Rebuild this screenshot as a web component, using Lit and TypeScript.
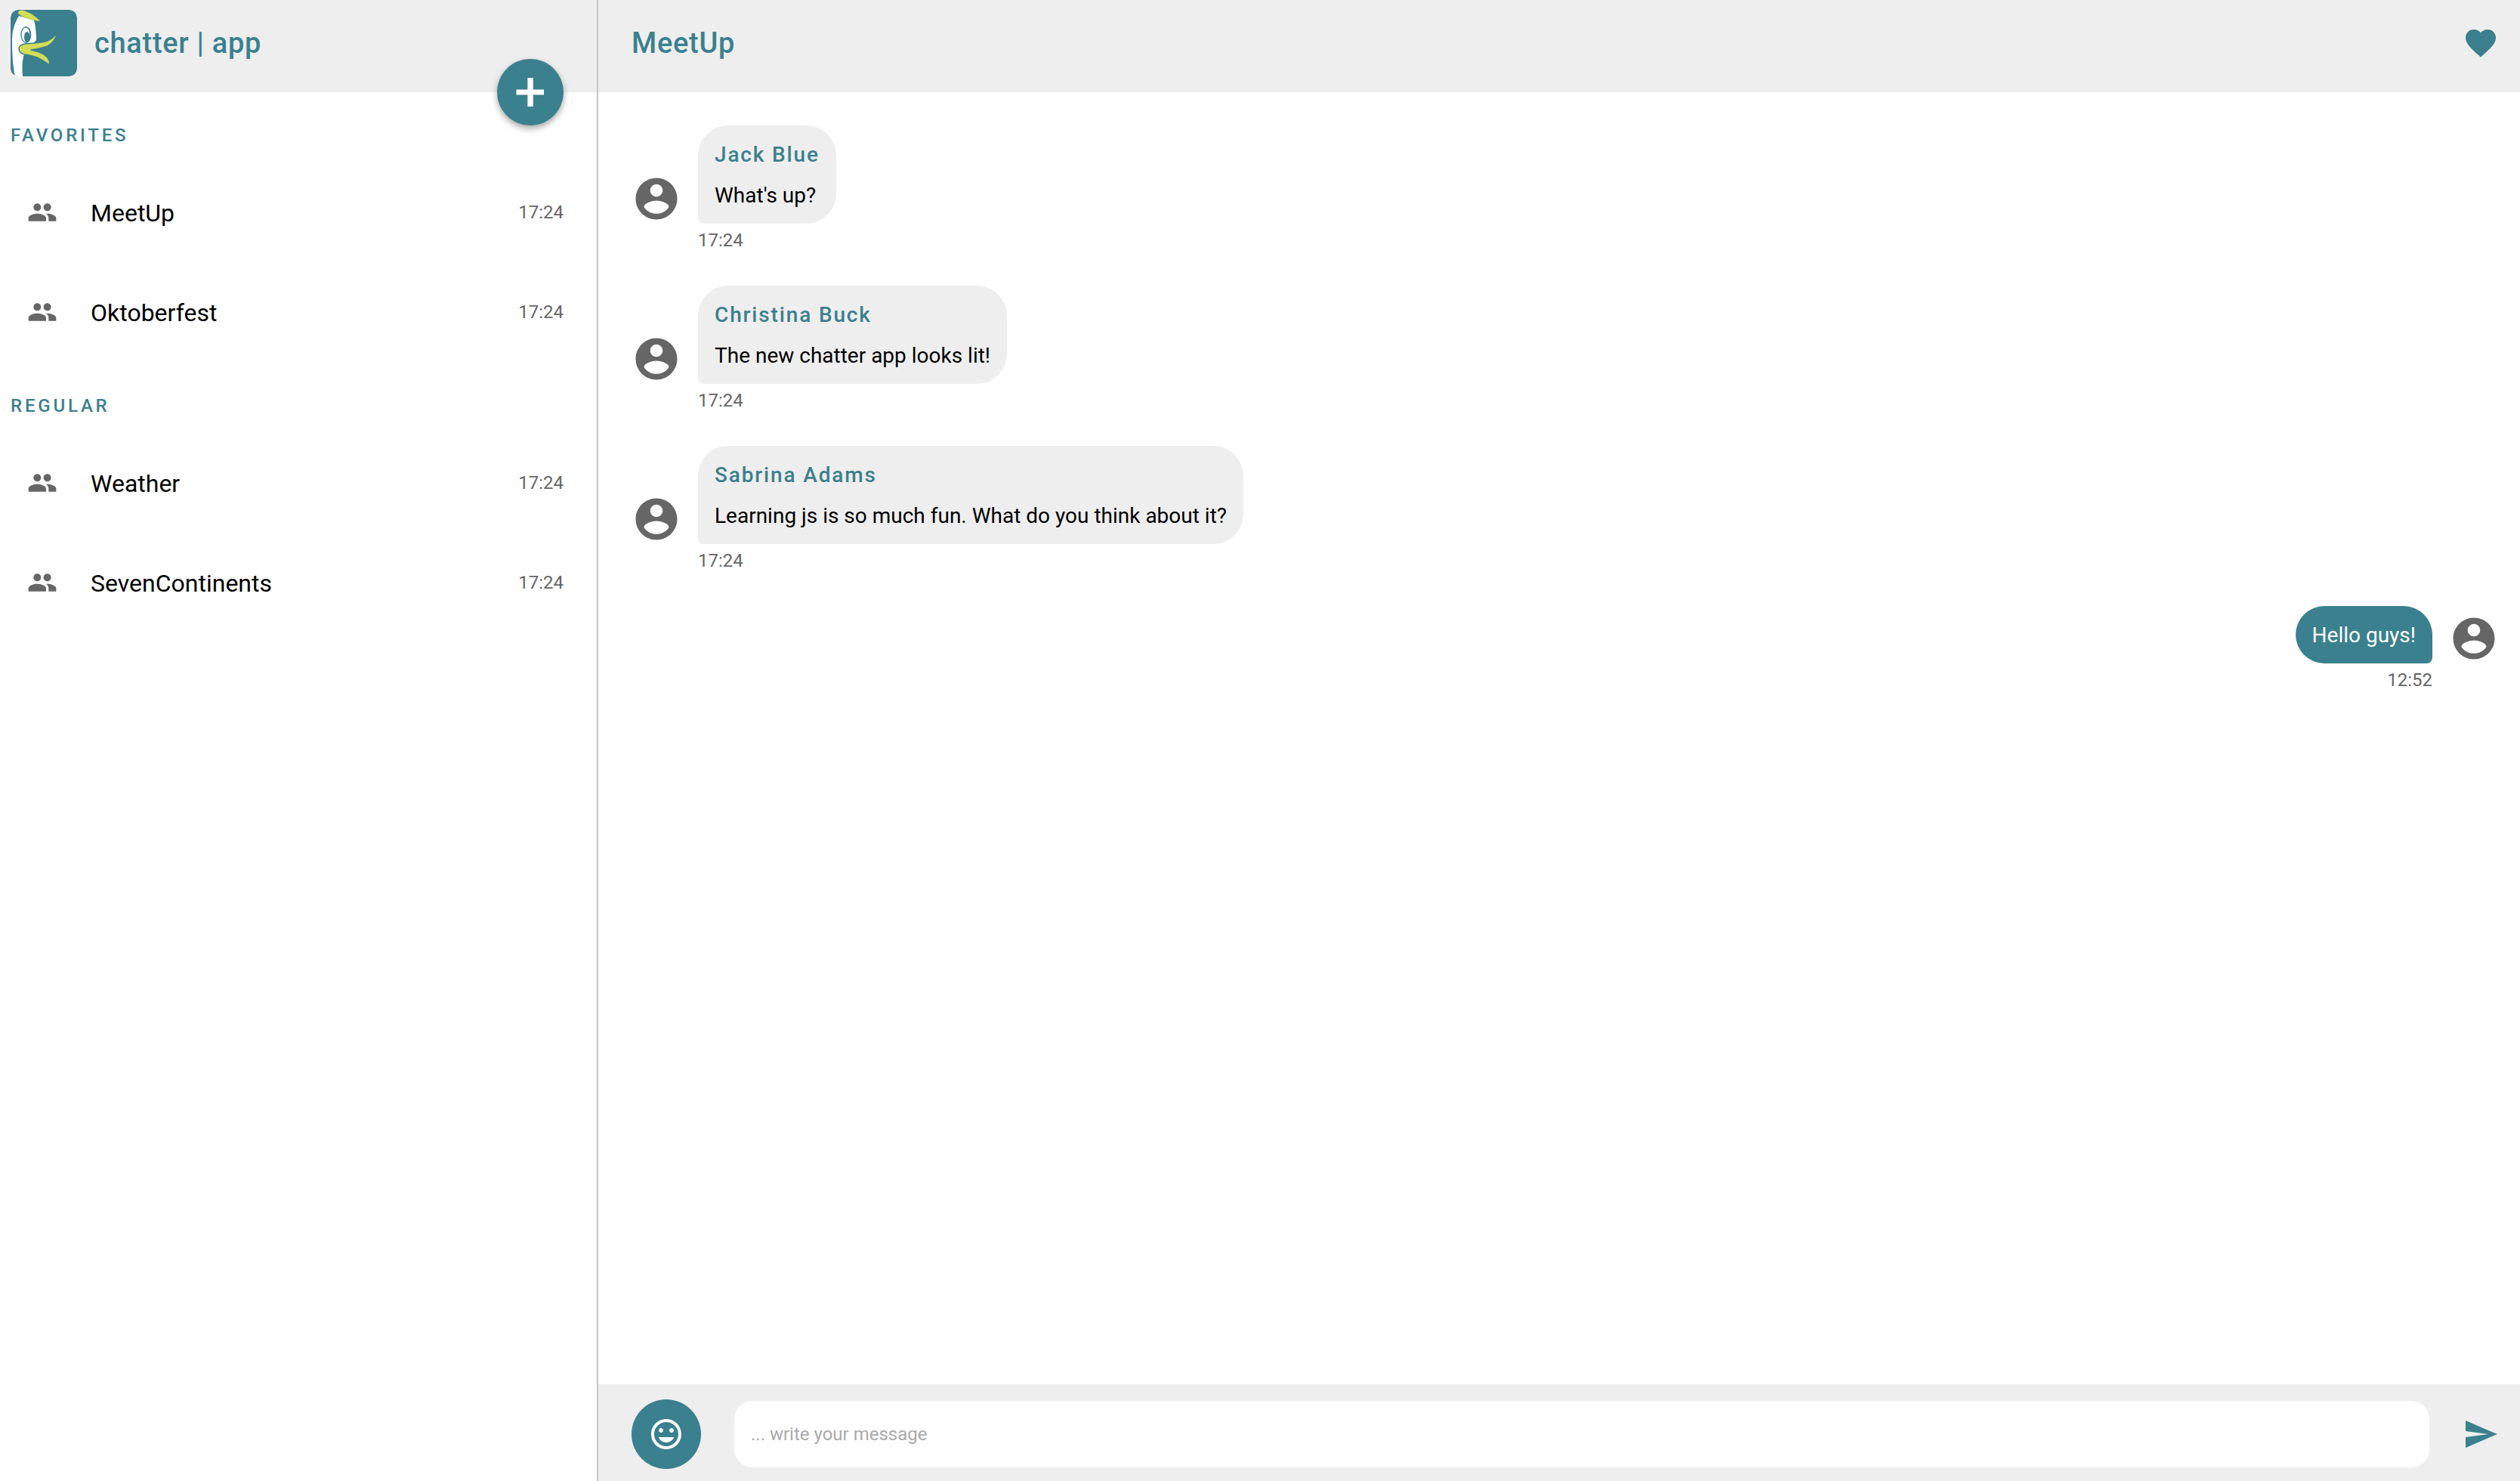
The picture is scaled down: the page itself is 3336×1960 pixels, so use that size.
import { LitElement, html, css } from 'lit';

const icons = {
  people: 'M16 11c1.66 0 2.99-1.34 2.99-3S17.66 5 16 5c-1.66 0-3 1.34-3 3s1.34 3 3 3zm-8 0c1.66 0 2.99-1.34 2.99-3S9.66 5 8 5C6.34 5 5 6.34 5 8s1.34 3 3 3zm0 2c-2.33 0-7 1.17-7 3.5V19h14v-2.5c0-2.33-4.67-3.5-7-3.5zm8 0c-.29 0-.62.02-.97.05 1.16.84 1.97 1.97 1.97 3.45V19h6v-2.5c0-2.33-4.67-3.5-7-3.5z',
  account: 'M12 2C6.48 2 2 6.48 2 12s4.48 10 10 10 10-4.48 10-10S17.52 2 12 2zm0 3c1.66 0 3 1.34 3 3s-1.34 3-3 3-3-1.34-3-3 1.34-3 3-3zm0 14.2c-2.5 0-4.71-1.28-6-3.22.03-1.99 4-3.08 6-3.08 1.99 0 5.97 1.09 6 3.08-1.29 1.94-3.5 3.22-6 3.22z',
  heart: 'M12 21.35l-1.45-1.32C5.4 15.36 2 12.28 2 8.5 2 5.42 4.42 3 7.5 3c1.74 0 3.41.81 4.5 2.09C13.09 3.81 14.76 3 16.5 3 19.58 3 22 5.42 22 8.5c0 3.78-3.4 6.86-8.55 11.54L12 21.35z',
  smile: 'M11.99 2C6.47 2 2 6.48 2 12s4.47 10 9.99 10C17.52 22 22 17.52 22 12S17.52 2 11.99 2zM12 20c-4.42 0-8-3.58-8-8s3.58-8 8-8 8 3.58 8 8-3.58 8-8 8zm3.5-9c.83 0 1.5-.67 1.5-1.5S16.33 8 15.5 8 14 8.67 14 9.5s.67 1.5 1.5 1.5zm-7 0c.83 0 1.5-.67 1.5-1.5S9.33 8 8.5 8 7 8.67 7 9.5 7.67 11 8.5 11zm3.5 6.5c2.33 0 4.31-1.46 5.11-3.5H6.89c.8 2.04 2.78 3.5 5.11 3.5z',
  send: 'M2.01 21L23 12 2.01 3 2 10l15 2-15 2z'
};

const grupos = [
  { titulo: 'FAVORITES', chats: ['MeetUp', 'Oktoberfest'] },
  { titulo: 'REGULAR', chats: ['Weather', 'SevenContinents'] }
];

const mensajes = [
  { autor: 'Jack Blue', texto: "What's up?", hora: '17:24' },
  { autor: 'Christina Buck', texto: 'The new chatter app looks lit!', hora: '17:24' },
  { autor: 'Sabrina Adams', texto: 'Learning js is so much fun. What do you think about it?', hora: '17:24' }
];

export class AppRoot extends LitElement {
  static get styles() {
    return css`
      :host {
        display: grid;
        grid-template-columns: 792px 1fr;
        height: 100vh;
        font-family: Roboto, sans-serif;
        background: #fff;
        color: #000;
      }

      svg {
        display: block;
        flex: none;
        fill: currentColor;
      }

      .lateral {
        position: relative;
        border-right: 2px solid #c6c6c6;
      }

      .cabecera {
        height: 122px;
        background: #eee;
        display: flex;
        align-items: center;
        color: #3b808e;
        font-size: 38px;
        font-weight: 500;
        letter-spacing: 0.7px;
      }

      .lateral .cabecera {
        padding-left: 14px;
        gap: 23px;
        padding-bottom: 8px;
        box-sizing: border-box;
        align-items: center;
      }

      .logo {
        width: 88px;
        height: 88px;
        border-radius: 10px;
      }

      .boton-nuevo {
        position: absolute;
        top: 78px;
        left: 658px;
        width: 88px;
        height: 88px;
        border-radius: 50%;
        background: #3b808e;
        color: #fff;
        display: flex;
        align-items: center;
        justify-content: center;
        box-shadow: 0 4px 8px rgba(0, 0, 0, 0.35);
      }

      .grupo {
        padding-top: 40px;
      }

      .grupo + .grupo {
        padding-top: 41px;
      }

      .grupo h2 {
        margin: 0 0 19px;
        padding-left: 14px;
        font-size: 24px;
        line-height: 34px;
        font-weight: 500;
        letter-spacing: 3.8px;
        color: #3b808e;
      }

      .chat {
        height: 132px;
        padding: 0 44px 0 36px;
        display: flex;
        align-items: center;
        gap: 44px;
        font-size: 32px;
      }

      .chat svg {
        color: #666;
      }

      .chat span {
        flex: 1;
        padding-top: 2px;
      }

      .chat time {
        font-size: 24px;
        color: #666;
      }

      .principal {
        display: flex;
        flex-direction: column;
        min-width: 0;
      }

      .principal .cabecera {
        justify-content: space-between;
        padding: 0 28px 8px 44px;
        box-sizing: border-box;
      }

      .mensajes {
        flex: 1;
        padding: 44px 28px 0 44px;
      }

      .fila {
        display: flex;
        gap: 22px;
        margin-bottom: 46px;
      }

      .fila.mia {
        justify-content: flex-end;
      }

      .fila > svg {
        color: #666;
        margin-top: 64px;
      }

      .fila.mia > svg {
        margin-top: 10px;
      }

      .globo {
        background: #eee;
        border-radius: 40px 40px 40px 8px;
        padding: 20px 22px 18px;
        font-size: 28px;
        line-height: 38px;
      }

      .mia .globo {
        background: #3b808e;
        color: #fff;
        border-radius: 40px 40px 8px 40px;
        padding: 20px 22px 18px;
      }

      .autor {
        margin-bottom: 16px;
        color: #3b808e;
        font-weight: 500;
        letter-spacing: 1.85px;
      }

      .columna time {
        display: block;
        margin-top: 8px;
        font-size: 24px;
        line-height: 28px;
        color: #666;
      }

      .mia .columna {
        display: flex;
        flex-direction: column;
        align-items: flex-end;
      }

      .pie {
        height: 128px;
        box-sizing: border-box;
        padding: 4px 28px 0 44px;
        background: #eee;
        display: flex;
        align-items: center;
        gap: 44px;
        color: #3b808e;
      }

      .boton-emoji {
        width: 92px;
        height: 92px;
        border-radius: 50%;
        background: #3b808e;
        color: #fff;
        display: flex;
        align-items: center;
        justify-content: center;
        flex: none;
      }

      input {
        flex: 1;
        min-width: 0;
        height: 88px;
        box-sizing: border-box;
        border: none;
        outline: none;
        border-radius: 24px;
        padding: 0 22px;
        font-family: inherit;
        font-size: 24px;
        background: #fff;
      }

      input::placeholder {
        color: #aaa;
        opacity: 1;
      }
    `;
  }

  _icono(d, size) {
    return html`<svg width=${size} height=${size} viewBox="0 0 24 24"><path d=${d}></path></svg>`;
  }

  _mas() {
    return html`<svg width="38" height="38" viewBox="0 0 38 38"><path d="M15.4 0H22.8V15.5H37V22.5H22.8V38H15.4V22.5H0.5V15.5H15.4Z"></path></svg>`;
  }

  _logo() {
    return html`
      <svg class="logo" viewBox="0 0 88 88">
        <path fill="#3b808e" d="M10 0H78A10 10 0 0 1 88 10V78A10 10 0 0 1 78 88H10A10 10 0 0 1 0 78V10A10 10 0 0 1 10 0Z"></path>
        <path fill="#fff" d="M6 88H16C15 76 15.5 66 18 59L34 40C34 30 33 21 31 14L11 8C5 18 2 28 2 40C2 58 3 76 6 88Z"></path>
        <path fill="#d2dc56" d="M10 3C12 0 16 0 20 2C28 5 35 10 39 15C30 14 18 11 13 7C11 6 10 5 10 3Z"></path>
        <ellipse cx="20.3" cy="33" rx="7" ry="11" fill="#3b808e"></ellipse>
        <ellipse cx="20" cy="33" rx="5.4" ry="9.4" fill="#fff"></ellipse>
        <ellipse cx="21.8" cy="36" rx="3.8" ry="7" fill="#3b808e"></ellipse>
        <path fill="#d2dc56" stroke="#3b808e" stroke-width="1.5" stroke-linejoin="round" d="M63 29C58 36 53 40 46 42C38 44 28 44 19 45C14 46 11 48 11 51C11 55 14 58 18 59C26 60 34 62 39 65C43 67 47 70 50 72C52 72 52 70 51 67C49 62 45 59 40 57C36 55 31 54 27 53C34 52 42 51 49 48C55 45 60 38 63 29Z"></path>
      </svg>
    `;
  }

  _mensaje(m) {
    return html`
      <div class="fila">
        ${this._icono(icons.account, 66)}
        <div class="columna">
          <div class="globo">
            <div class="autor">${m.autor}</div>
            <div>${m.texto}</div>
          </div>
          <time>${m.hora}</time>
        </div>
      </div>
    `;
  }

  render() {
    return html`
      <aside class="lateral">
        <div class="cabecera">${this._logo()}<span>chatter | app</span></div>
        <div class="boton-nuevo">${this._mas()}</div>
        ${grupos.map(g => html`
          <section class="grupo">
            <h2>${g.titulo}</h2>
            ${g.chats.map(c => html`
              <div class="chat">${this._icono(icons.people, 40)}<span>${c}</span><time>17:24</time></div>
            `)}
          </section>
        `)}
      </aside>
      <main class="principal">
        <div class="cabecera"><span>MeetUp</span>${this._icono(icons.heart, 48)}</div>
        <div class="mensajes">
          ${mensajes.map(m => this._mensaje(m))}
          <div class="fila mia">
            <div class="columna">
              <div class="globo">Hello guys!</div>
              <time>12:52</time>
            </div>
            ${this._icono(icons.account, 66)}
          </div>
        </div>
        <div class="pie">
          <div class="boton-emoji">${this._icono(icons.smile, 48)}</div>
          <input placeholder="... write your message">
          ${this._icono(icons.send, 48)}
        </div>
      </main>
    `;
  }
}

customElements.define('app-root', AppRoot);
